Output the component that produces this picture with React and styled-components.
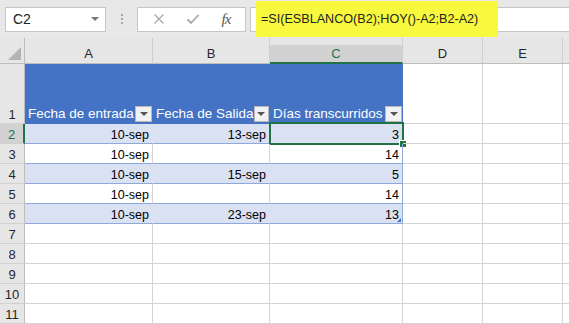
import React from 'react'
import styled, { createGlobalStyle, css } from 'styled-components'

const Global = createGlobalStyle`
  html, body {
    margin: 0;
    padding: 0;
    background: #ffffff;
    overflow: hidden;
  }
  body {
    font-family: "Liberation Sans", Arial, sans-serif;
  }
`

const GREEN = '#217346'
const GRID = '#d4d4d4'
const TABLE_LINE = '#8ea9db'
const BAND = '#d9e1f2'
const HEAD_BLUE = '#4472c4'

const Window = styled.div`
  width: 569px;
  height: 324px;
  overflow: hidden;
  background: #ffffff;
`

const FormulaBar = styled.div`
  height: 38px;
  display: flex;
  align-items: center;
  padding-left: 5px;
  background: #e8e8e8;
  box-sizing: border-box;
`

const NameBox = styled.div`
  width: 101px;
  height: 25px;
  box-sizing: border-box;
  background: #fff;
  border: 1px solid #c6c6c6;
  display: flex;
  align-items: center;
  justify-content: space-between;
  padding: 0 6px 0 7px;
  font-size: 14px;
  color: #222;
`

const Caret = styled.span`
  width: 0;
  height: 0;
  border-left: 4px solid transparent;
  border-right: 4px solid transparent;
  border-top: 4px solid #777;
`

const Grip = styled.div`
  width: 31px;
  display: flex;
  flex-direction: column;
  align-items: center;
  gap: 2px;
  span {
    width: 2px;
    height: 2px;
    background: #a6a6a6;
  }
`

const ActionBox = styled.div`
  width: 109px;
  height: 25px;
  box-sizing: border-box;
  background: #fff;
  border: 1px solid #c6c6c6;
  display: flex;
  align-items: center;
  justify-content: space-around;
  padding: 0 4px 0 4px;
`

const Fx = styled.span`
  font-family: "Liberation Serif", "Times New Roman", serif;
  font-style: italic;
  font-size: 15px;
  color: #555;
  letter-spacing: -1px;
`

const FormulaInput = styled.div`
  flex: 1;
  margin-left: 4px;
  margin-right: -2px;
  height: 25px;
  box-sizing: border-box;
  background: #fff;
  border: 1px solid #c6c6c6;
  display: flex;
  align-items: center;
  padding-left: 5px;
  font-size: 12.6px;
  color: #222;
`

const Highlight = styled.span`
  background: #f8f83e;
  padding: 11px 20px 11px 5px;
`

const Sheet = styled.div`
  display: grid;
  grid-template-columns: 25px 128px 117px 133px 80px 80px 80px;
  grid-template-rows: 26px 60px repeat(10, 20px);
  font-size: 12.5px;
  color: #000;
`

const Corner = styled.div`
  background: #e6e6e6;
  border-right: 1px solid #bdbdbd;
  border-bottom: 1px solid #bdbdbd;
  box-sizing: border-box;
  display: flex;
  align-items: flex-end;
  justify-content: flex-end;
  padding: 0 3px 3px 0;
`

const ColHead = styled.div`
  background: #e6e6e6;
  box-sizing: border-box;
  border-right: 1px solid #cfcfcf;
  border-bottom: 1px solid #bdbdbd;
  display: flex;
  align-items: flex-end;
  justify-content: center;
  padding-bottom: 2px;
  font-size: 13px;
  color: #262626;
  ${p => p.$active && css`
    background: linear-gradient(#e6e6e6 0 7px, #d2d2d2 7px);
    border-bottom: 2px solid ${GREEN};
    color: ${GREEN};
    padding-bottom: 1px;
  `}
`

const RowHead = styled.div`
  background: #e6e6e6;
  box-sizing: border-box;
  border-right: 1px solid #bdbdbd;
  border-bottom: 1px solid #d0d0d0;
  display: flex;
  align-items: flex-end;
  justify-content: center;
  padding-bottom: 1px;
  font-size: 13px;
  color: #262626;
  ${p => p.$active && css`
    background: #d2d2d2;
    border-right: 2px solid ${GREEN};
    color: ${GREEN};
  `}
`

const Cell = styled.div`
  position: relative;
  box-sizing: border-box;
  border-right: 1px solid ${GRID};
  border-bottom: 1px solid ${GRID};
  display: flex;
  align-items: flex-end;
  justify-content: flex-end;
  padding: 0 3px 1px 3px;
  white-space: nowrap;
  ${p => p.$band && css`
    background: ${BAND};
    border-right-color: ${BAND};
  `}
  ${p => p.$table && css`
    border-bottom-color: ${TABLE_LINE};
  `}
  ${p => p.$edge && css`
    border-right-color: ${TABLE_LINE};
  `}
`

const HeaderCell = styled.div`
  background: ${HEAD_BLUE};
  box-sizing: border-box;
  display: flex;
  align-items: flex-end;
  justify-content: space-between;
  padding: 0 1px 2px 3px;
  color: #fff;
  font-size: 13.5px;
  white-space: nowrap;
  span {
    padding-bottom: 1px;
  }
`

const FilterButton = styled.div`
  width: 17px;
  height: 16px;
  box-sizing: border-box;
  background: #f2f2f2;
  border: 1px solid #b8b8b8;
  display: flex;
  align-items: center;
  justify-content: center;
  &::after {
    content: '';
    border-left: 4px solid transparent;
    border-right: 4px solid transparent;
    border-top: 4px solid #555;
  }
`

const Selection = styled.div`
  position: absolute;
  left: -1px;
  top: -2px;
  right: -2px;
  bottom: -2px;
  border: 2px solid ${GREEN};
  pointer-events: none;
`

const FillHandle = styled.div`
  position: absolute;
  right: -5px;
  bottom: -5px;
  width: 6px;
  height: 6px;
  background: ${GREEN};
  border: 1px solid #fff;
`

const ResizeCorner = styled.div`
  position: absolute;
  right: 1px;
  bottom: 1px;
  width: 0;
  height: 0;
  border-left: 4px solid transparent;
  border-bottom: 4px solid #3f6fc6;
`

// F only peeks in at the right edge, its letter is off screen
const columns = ['A', 'B', 'C', 'D', 'E', '']

const data = [
  { a: '10-sep', b: '13-sep', c: '3' },
  { a: '10-sep', b: '', c: '14' },
  { a: '10-sep', b: '15-sep', c: '5' },
  { a: '10-sep', b: '', c: '14' },
  { a: '10-sep', b: '23-sep', c: '13' },
]

const X = () => (
  <svg width="12" height="12" viewBox="0 0 12 12">
    <path d="M1.5 1.5 L10.5 10.5 M10.5 1.5 L1.5 10.5" stroke="#a8a8a8" strokeWidth="1.3" fill="none" />
  </svg>
)

const Check = () => (
  <svg width="14" height="12" viewBox="0 0 14 12">
    <path d="M1.5 6.5 L5 10 L12.5 2" stroke="#a8a8a8" strokeWidth="1.8" fill="none" />
  </svg>
)

const App = () => {
  return (
    <Window>
      <Global />
      <FormulaBar>
        <NameBox>
          <span>C2</span>
          <Caret />
        </NameBox>
        <Grip><span /><span /><span /></Grip>
        <ActionBox>
          <X />
          <Check />
          <Fx>fx</Fx>
        </ActionBox>
        <FormulaInput>
          <Highlight>=SI(ESBLANCO(B2);HOY()-A2;B2-A2)</Highlight>
        </FormulaInput>
      </FormulaBar>
      <Sheet>
        <Corner>
          <svg width="13" height="13" viewBox="0 0 13 13">
            <polygon points="13,0 13,13 0,13" fill="#b4b4b4" />
          </svg>
        </Corner>
        {columns.map((c, i) => (
          <ColHead key={i} $active={c === 'C'}>{c}</ColHead>
        ))}

        <RowHead>1</RowHead>
        <HeaderCell><span>Fecha de entrada</span><FilterButton /></HeaderCell>
        <HeaderCell><span>Fecha de Salida</span><FilterButton /></HeaderCell>
        <HeaderCell><span>Días transcurridos</span><FilterButton /></HeaderCell>
        <Cell />
        <Cell />
        <Cell />

        {data.map((r, i) => {
          const band = i % 2 === 0
          const last = i === data.length - 1
          return (
            <React.Fragment key={i}>
              <RowHead $active={i === 0}>{i + 2}</RowHead>
              <Cell $band={band} $table>{r.a}</Cell>
              <Cell $band={band} $table>{r.b}</Cell>
              <Cell $band={band} $table $edge>
                {r.c}
                {i === 0 && <Selection><FillHandle /></Selection>}
                {last && <ResizeCorner />}
              </Cell>
              <Cell />
              <Cell />
              <Cell />
            </React.Fragment>
          )
        })}

        {[7, 8, 9, 10, 11].map(n => (
          <React.Fragment key={n}>
            <RowHead>{n}</RowHead>
            <Cell /><Cell /><Cell /><Cell /><Cell /><Cell />
          </React.Fragment>
        ))}
      </Sheet>
    </Window>
  )
}

export default App
